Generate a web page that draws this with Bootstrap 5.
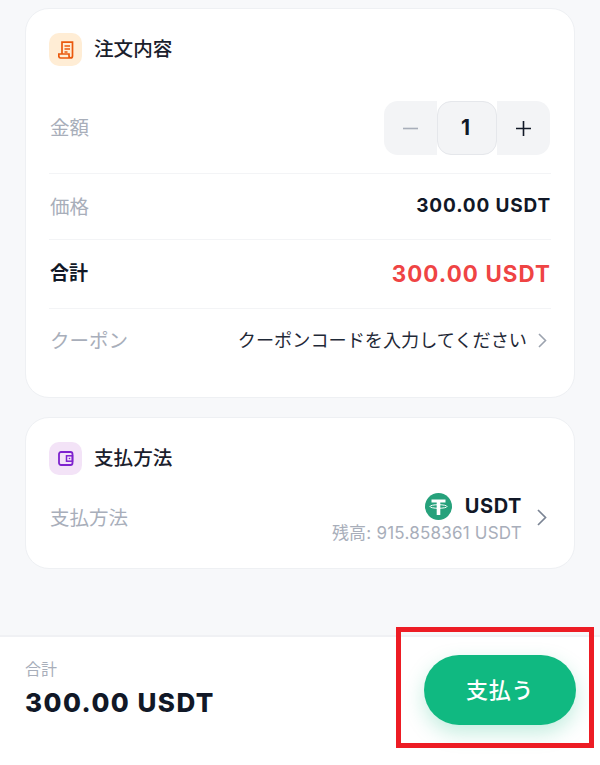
<!DOCTYPE html>
<html lang="ja">
<head>
<meta charset="utf-8">
<title>注文内容</title>
<link href="https://cdn.jsdelivr.net/npm/bootstrap@5.3.0/dist/css/bootstrap.min.css" rel="stylesheet">
<style>
html,body{height:765px;overflow:hidden}
body{background:#f7f8fa;font-family:Inter,"Noto Sans CJK JP",sans-serif;color:#111827;width:600px}
.shell{height:765px;position:relative;padding:8px 25px 0}
.panel{background:#fff;border:1px solid #eef0f3;border-radius:24px;padding:24px 23px 0}
.panel-a{height:390px}
.panel-b{height:152px;margin-top:19px}
.head-ico{width:33px;height:33px;border-radius:10px;flex:none}
.ico-o{background:#ffedd5}
.ico-p{background:#f3e3f7}
.head-txt{font-size:19.6px;font-weight:500;line-height:33px;margin-left:12px;color:#1a202c}
.rowline{border-bottom:1px solid #f3f4f6}
.r1{height:108px;padding-top:35px;align-items:flex-start}
.r2{height:66px}
.r3{height:69px}
.r4{height:64px}
.lbl{font-size:19.5px;color:#a8aeba;line-height:28px;margin-left:1px}
.r1 .lbl{margin-top:13px}
.val{font-size:19px;font-weight:700;letter-spacing:.85px;color:#111827}
.lbl-strong{font-size:19px;font-weight:600;color:#111827;margin-left:1px}
.val-red{font-size:22.3px;font-weight:700;letter-spacing:1.1px;color:#ef4444}
.stepper{width:167px;height:54px}
.step-btn{width:53px;background:#f3f4f6}
.step-l{border-radius:14px 0 0 14px}
.step-r{border-radius:0 14px 14px 0}
.step-mid{width:60px;height:54px;background:#f3f4f6;border:1px solid #e5e7eb;border-radius:14px;font-size:21px;font-weight:700;padding-right:3px}
.coupon{font-size:18.15px;color:#1f2937;white-space:nowrap}
.chev-a{flex:none;margin-left:11px;margin-right:4px}
.chev-b{flex:none;margin-left:15px;margin-right:4px}
.pay-row{margin-top:16px}
.pay-row .lbl{margin-top:2px}
.usdt{font-size:20px;font-weight:700;letter-spacing:.6px;line-height:30px;color:#111827}
.tether{margin-right:13px;flex:none}
.bal{font-size:17px;line-height:20px;color:#a8aeba;letter-spacing:.22px;margin-top:2px}
.bottom{position:absolute;left:0;right:0;top:635px;height:130px;background:#fff;border-top:2px solid #f0f1f4;padding:20px 24px 0 25px}
.sum-lbl{font-size:16px;color:#a8aeba;line-height:24px}
.sum-val{font-size:26px;font-weight:800;letter-spacing:1.45px;line-height:32px;margin-top:6px;color:#111827}
.pay-btn{width:152px;height:70px;margin-top:-2px;border-radius:35px;background:#10b981;color:#fff;font-size:22px;font-weight:500;letter-spacing:.6px;border:0;box-shadow:0 8px 20px rgba(16,185,129,.25)}
.marker{position:absolute;left:396px;top:627px;width:198px;height:121px;border:5px solid #ed1c24;pointer-events:none}
</style>
</head>
<body>
<div class="shell">
  <section class="panel panel-a">
    <div class="d-flex align-items-center">
      <div class="head-ico ico-o d-flex align-items-center justify-content-center">
        <svg width="16" height="18" viewBox="0 0 16 18" fill="none" stroke="#ea580c" stroke-width="1.7"><path d="M4 13V1.2h10.5V15c0 1.2-.8 2-2 2H2.5C1.3 17 .8 16 .8 15v-2H11v2c0 1.2.8 2 2 2"/><path d="M6.5 5h5.5M6.5 8h5.5M6.5 11h3" stroke-width="1.4"/></svg>
      </div>
      <div class="head-txt">注文内容</div>
    </div>
    <div class="d-flex justify-content-between rowline r1">
      <span class="lbl">金額</span>
      <div class="stepper d-flex">
        <div class="step-btn step-l d-flex align-items-center justify-content-center"><svg width="15" height="15" viewBox="0 0 15 15"><path d="M0 7.5h15" stroke="#a8aeba" stroke-width="1.6"/></svg></div>
        <div class="step-mid d-flex align-items-center justify-content-center">1</div>
        <div class="step-btn step-r d-flex align-items-center justify-content-center"><svg width="15" height="15" viewBox="0 0 15 15"><path d="M0 7.5h15M7.5 0v15" stroke="#111827" stroke-width="1.6"/></svg></div>
      </div>
    </div>
    <div class="d-flex justify-content-between align-items-center rowline r2">
      <span class="lbl">価格</span>
      <span class="val">300.00 USDT</span>
    </div>
    <div class="d-flex justify-content-between align-items-center rowline r3">
      <span class="lbl-strong">合計</span>
      <span class="val-red">300.00 USDT</span>
    </div>
    <div class="d-flex justify-content-between align-items-center r4">
      <span class="lbl">クーポン</span>
      <div class="d-flex align-items-center">
        <span class="coupon">クーポンコードを入力してください</span>
        <svg class="chev-a" width="9" height="15" viewBox="0 0 9 15" fill="none" stroke="#9ca3af" stroke-width="1.6"><path d="M1 1l6.5 6.5L1 14"/></svg>
      </div>
    </div>
  </section>
  <section class="panel panel-b">
    <div class="d-flex align-items-center">
      <div class="head-ico ico-p d-flex align-items-center justify-content-center">
        <svg width="16" height="15" viewBox="0 0 16 15" fill="none" stroke="#7e22ce" stroke-width="1.8"><rect x="1" y="1" width="13.5" height="13" rx="2"/><rect x="8.5" y="4.8" width="6" height="5.4" stroke-width="1.5"/><circle cx="11.5" cy="7.5" r=".8" fill="#7e22ce" stroke="none"/></svg>
      </div>
      <div class="head-txt">支払方法</div>
    </div>
    <div class="d-flex justify-content-between align-items-center pay-row">
      <span class="lbl">支払方法</span>
      <div class="d-flex align-items-center">
        <div class="text-end">
          <div class="d-flex align-items-center justify-content-end">
            <svg class="tether" width="27" height="27" viewBox="0 0 27 27"><circle cx="13.5" cy="13.5" r="13.5" fill="#26a17b"/><path d="M6.5 6.5h14v3h-5.2V22h-3.6V9.5H6.5z" fill="#fff"/><ellipse cx="13.5" cy="13.5" rx="8.5" ry="1.8" fill="none" stroke="#fff" stroke-width="1"/></svg>
            <span class="usdt">USDT</span>
          </div>
          <div class="bal">残高: 915.858361 USDT</div>
        </div>
        <svg class="chev-b" width="10" height="17" viewBox="0 0 10 17" fill="none" stroke="#7b8494" stroke-width="1.7"><path d="M1 1l7.5 7.5L1 16"/></svg>
      </div>
    </div>
  </section>
  <footer class="bottom d-flex justify-content-between">
    <div>
      <div class="sum-lbl">合計</div>
      <div class="sum-val">300.00 USDT</div>
    </div>
    <button class="btn pay-btn" type="button">支払う</button>
  </footer>
  <div class="marker"></div>
</div>
</body>
</html>
